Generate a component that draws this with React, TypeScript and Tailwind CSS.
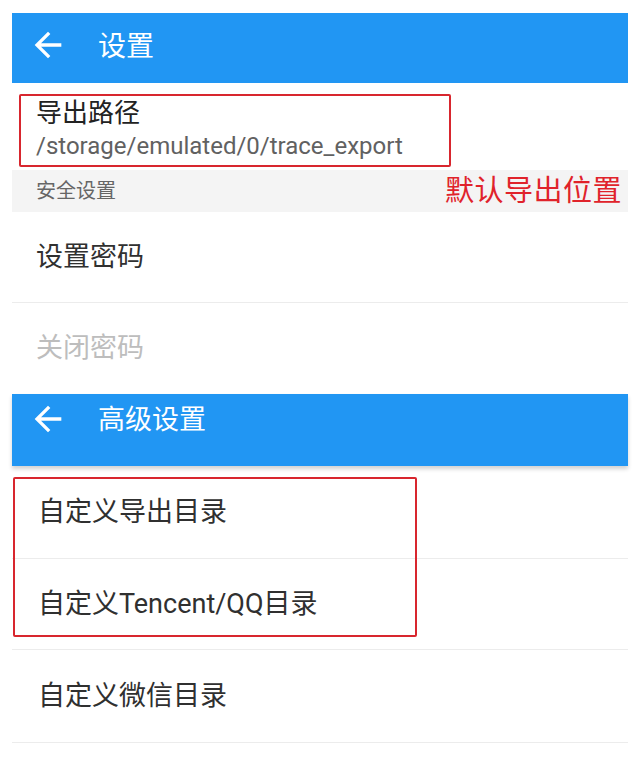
import React from "react";

const FONT = { fontFamily: 'Roboto, "Noto Sans CJK SC", sans-serif' };

function BackArrow({ size = 40 }: { size?: number }) {
  return (
    <svg width={size} height={size} viewBox="0 0 24 24" fill="white">
      <path d="M20 11H7.83l5.59-5.59L12 4l-8 8 8 8 1.41-1.41L7.83 13H20v-2z" />
    </svg>
  );
}

function Row({ text, disabled = false, border = true }: { text: string; disabled?: boolean; border?: boolean }) {
  return (
    <div
      className={`h-[91px] flex items-center pl-[24px] ${border ? "border-b border-[#ececec]" : ""}`}
    >
      <span className={`text-[27px] leading-none ${disabled ? "text-[#bdbdbd]" : "text-[#303030]"}`}>{text}</span>
    </div>
  );
}

export default function App() {
  return (
    <div className="w-[640px] h-[773px] bg-white overflow-hidden" style={FONT}>
      <div className="px-[12px] pt-[13px]">
        {/* Top toolbar */}
        <div className="h-[70px] bg-[#2196f3] flex items-center">
          <div className="ml-[16px] w-[40px] h-[40px] -mt-[6px]">
            <BackArrow size={40} />
          </div>
          <span className="ml-[30px] text-white text-[28px] leading-none -mt-[3px]">设置</span>
        </div>

        {/* Export path */}
        <div className="relative h-[87px]">
          <div className="pl-[24px] pt-[15px]">
            <div className="text-[26px] leading-[30px] text-[#222]">导出路径</div>
            <div className="text-[24px] leading-[30px] text-[#616161] mt-[3px]">/storage/emulated/0/trace_export</div>
          </div>
          <div className="absolute left-[7px] top-[11px] w-[432px] h-[73px] border-2 border-[#d8262e] rounded-[2px]" />
        </div>

        {/* Section header */}
        <div className="h-[42px] bg-[#f4f4f4] flex items-center justify-between pl-[24px] pr-[6px]">
          <span className="text-[20px] leading-none text-[#666]">安全设置</span>
          <span className="text-[29px] leading-none text-[#e0232b] tracking-[0.5px]">默认导出位置</span>
        </div>

        <Row text="设置密码" />
        <Row text="关闭密码" disabled border={false} />

        {/* Second toolbar */}
        <div className="h-[72px] bg-[#2196f3] flex items-start pt-[5px] shadow-[0_3px_4px_rgba(0,0,0,0.18)] relative z-10">
          <div className="ml-[16px] w-[40px] h-[40px]">
            <BackArrow size={40} />
          </div>
          <span className="ml-[30px] mt-[6px] text-white text-[27px] leading-[30px]">高级设置</span>
        </div>

        {/* Advanced list */}
        <div className="relative">
          <div className="h-[93px] flex items-center pl-[26px] border-b border-[#ececec]">
            <span className="text-[27px] leading-none text-[#303030]">自定义导出目录</span>
          </div>
          <div className="h-[91px] flex items-center pl-[26px] border-b border-[#ececec]">
            <span className="text-[27px] leading-none text-[#303030]">自定义Tencent/QQ目录</span>
          </div>
          <div className="h-[93px] flex items-center pl-[26px] border-b border-[#ececec]">
            <span className="text-[27px] leading-none text-[#303030]">自定义微信目录</span>
          </div>
          <div className="absolute left-[1px] top-[11px] w-[404px] h-[160px] border-2 border-[#d8262e] rounded-[2px]" />
        </div>
      </div>
    </div>
  );
}
